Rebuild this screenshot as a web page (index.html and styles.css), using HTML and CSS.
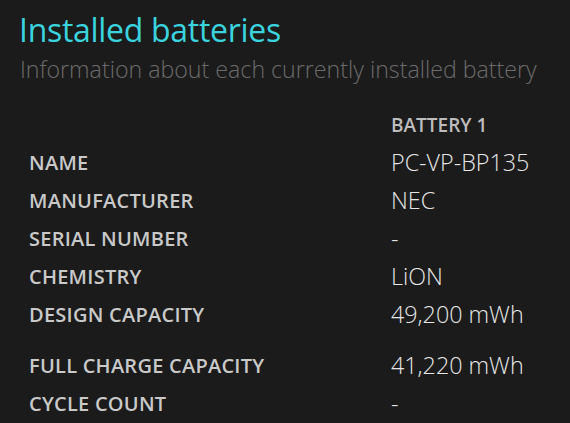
FILE: index.html
```html
<!DOCTYPE html>
<html>
<head>
<meta charset="utf-8">
<link rel="stylesheet" href="styles.css">
</head>
<body>
<div class="page">
  <h1 class="title">Installed batteries</h1>
  <p class="subtitle">Information about each currently installed battery</p>
  <div class="table">
    <div class="row head">
      <div class="label"></div>
      <div class="col-head">BATTERY 1</div>
    </div>
    <div class="row"><div class="label">NAME</div><div class="value">PC-VP-BP135</div></div>
    <div class="row"><div class="label">MANUFACTURER</div><div class="value">NEC</div></div>
    <div class="row"><div class="label">SERIAL NUMBER</div><div class="value">-</div></div>
    <div class="row"><div class="label">CHEMISTRY</div><div class="value">LiON</div></div>
    <div class="row"><div class="label">DESIGN CAPACITY</div><div class="value">49,200 mWh</div></div>
    <div class="row spaced"><div class="label">FULL CHARGE CAPACITY</div><div class="value">41,220 mWh</div></div>
    <div class="row"><div class="label">CYCLE COUNT</div><div class="value">-</div></div>
  </div>
</div>
</body>
</html>
```

FILE: styles.css
```css
html, body {
  margin: 0;
  padding: 0;
  background: #1b1b1b;
}
body {
  font-family: "Open Sans", "Noto Sans", sans-serif;
  overflow: hidden;
}
.page {
  padding: 10px 0 0 19px;
}
.title {
  margin: 0;
  font-size: 32px;
  font-weight: 400;
  line-height: 40px;
  letter-spacing: -0.3px;
  color: #3ad3de;
}
.subtitle {
  margin: 3px 0 0 1px;
  font-size: 23.2px;
  font-weight: 300;
  line-height: 32px;
  color: #6b6b6b;
}
.table {
  margin: 22px 0 0 10px;
  display: flex;
  flex-direction: column;
}
.row {
  display: flex;
  align-items: center;
  height: 38px;
}
.row.head {
  height: 36px;
}
.row.spaced {
  margin-top: 13px;
}
.label {
  width: 362px;
  flex: none;
  font-size: 20px;
  font-weight: 600;
  letter-spacing: 0.25px;
  color: #c9c9c9;
}
.col-head {
  font-size: 19px;
  font-weight: 600;
  color: #bdbdbd;
}
.value {
  font-size: 23.3px;
  font-weight: 300;
  color: #e6e6e6;
}
```
